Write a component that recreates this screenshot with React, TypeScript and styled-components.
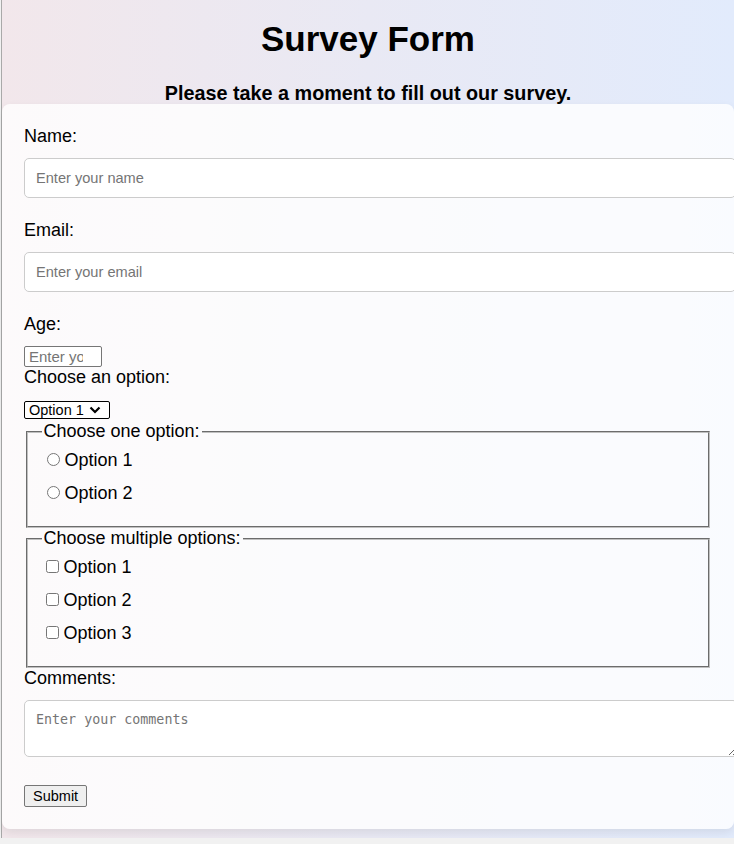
import { FC } from 'react';
import styled, { createGlobalStyle } from 'styled-components';

const GlobalStyle = createGlobalStyle`
	html, body {
		margin: 0;
		padding: 0;
		background: #f1f1f1;
		overflow: hidden;
	}
	body {
		font-family: 'Liberation Sans', Arial, sans-serif;
		color: #000;
	}
`;

const radioOptions = ['Option 1', 'Option 2'];
const checkOptions = ['Option 1', 'Option 2', 'Option 3'];

const ChevronDown: FC = () => (
	<ChevronIcon width="12" height="8" viewBox="0 0 12 8" aria-hidden>
		<path d="M1.5 1.5 L6 6 L10.5 1.5" fill="none" stroke="#000" strokeWidth="2.2" />
	</ChevronIcon>
);

const App: FC = () => {
	return (
		<>
			<GlobalStyle />
			<Page>
				<Title>Survey Form</Title>
				<Subtitle>Please take a moment to fill out our survey.</Subtitle>
				<FormCard onSubmit={(e) => e.preventDefault()}>
					<Label htmlFor="name">Name:</Label>
					<TextInput id="name" type="text" placeholder="Enter your name" />

					<Label htmlFor="email">Email:</Label>
					<TextInput id="email" type="email" placeholder="Enter your email" />

					<Label htmlFor="age">Age:</Label>
					<AgeInput id="age" type="number" placeholder="Enter your age" />

					<Label htmlFor="dropdown" $tight>
						Choose an option:
					</Label>
					<SelectWrap>
						<Select id="dropdown" defaultValue="1">
							<option value="1">Option 1</option>
							<option value="2">Option 2</option>
						</Select>
						<ChevronDown />
					</SelectWrap>

					<Group>
						<Legend>Choose one option:</Legend>
						{radioOptions.map((opt) => (
							<ChoiceRow key={opt}>
								<input type="radio" name="single" value={opt} />
								{opt}
							</ChoiceRow>
						))}
					</Group>

					<Group>
						<Legend>Choose multiple options:</Legend>
						{checkOptions.map((opt) => (
							<ChoiceRow key={opt}>
								<input type="checkbox" name="multi" value={opt} />
								{opt}
							</ChoiceRow>
						))}
					</Group>

					<Label htmlFor="comments">Comments:</Label>
					<Comments id="comments" placeholder="Enter your comments" />

					<SubmitButton type="submit">Submit</SubmitButton>
				</FormCard>
			</Page>
		</>
	);
};

const Page = styled.div`
	box-sizing: border-box;
	margin-left: 1px;
	width: 733px;
	height: 838px;
	border-left: 1px solid #a9a9a9;
	background: linear-gradient(to right, #f2e7eb 0%, #e9e9f4 50%, #e2ebfc 100%);
	padding-top: 18px;
`;

const Title = styled.h1`
	margin: 0;
	text-align: center;
	font-size: 35px;
	font-weight: bold;
	line-height: 41px;
`;

const Subtitle = styled.h2`
	margin: 23px 0 0;
	text-align: center;
	font-size: 19.8px;
	font-weight: bold;
	line-height: 22px;
`;

const FormCard = styled.form`
	box-sizing: border-box;
	width: 732px;
	padding: 22px 22px;
	background: rgba(255, 255, 255, 0.8);
	border-radius: 8px;
	box-shadow: 0 4px 10px rgba(0, 0, 0, 0.08);
	font-size: 18px;
`;

const Label = styled.label<{ $tight?: boolean }>`
	display: block;
	font-size: 18px;
	line-height: 21px;
	margin-bottom: ${(props) => (props.$tight ? '13px' : '11px')};
`;

const TextInput = styled.input`
	display: block;
	box-sizing: content-box;
	width: 100%;
	height: 18px;
	padding: 10px 11px;
	margin: 0 0 22px;
	border: 1px solid #cccccc;
	border-radius: 5px;
	background: #fff;
	font-family: 'Liberation Sans', Arial, sans-serif;
	font-size: 14.6px;
	&::placeholder {
		color: #757575;
	}
`;

const AgeInput = styled.input`
	display: block;
	box-sizing: border-box;
	width: 78px;
	height: 21px;
	margin: 0;
	padding: 0 18px 0 4px;
	border: 1px solid #767676;
	border-radius: 2px;
	background: #fff;
	font-family: 'Liberation Sans', Arial, sans-serif;
	font-size: 15px;
	&::placeholder {
		color: #757575;
	}
	&::-webkit-inner-spin-button {
		display: none;
	}
`;

const SelectWrap = styled.div`
	position: relative;
	width: 86px;
	margin: 0 0 2px;
`;

const Select = styled.select`
	display: block;
	box-sizing: border-box;
	width: 86px;
	height: 18px;
	margin: 0;
	padding: 0 20px 0 4px;
	border: 1px solid #000;
	border-radius: 2px;
	background: #fff;
	appearance: none;
	font-family: 'Liberation Sans', Arial, sans-serif;
	font-size: 14.5px;
	line-height: 16px;
	color: #000;
`;

const ChevronIcon = styled.svg`
	position: absolute;
	right: 9px;
	top: 5px;
	pointer-events: none;
`;

const Group = styled.fieldset`
	margin: 0 2px;
	padding: 8px 13.5px 10px;
	border: 2px groove #c0c0c0;
	font-size: 18px;
`;

const Legend = styled.legend`
	padding: 0 2px;
	font-size: 18px;
	line-height: 21px;
`;

const ChoiceRow = styled.label`
	display: block;
	line-height: 21px;
	margin-bottom: 12px;
	input[type='radio'] {
		margin: 3px 5px 0 5px;
	}
	input[type='checkbox'] {
		margin: 3px 5px 3px 4px;
	}
`;

const Comments = styled.textarea`
	display: block;
	box-sizing: border-box;
	width: calc(100% + 26px);
	height: 57px;
	margin: 0 0 28px;
	padding: 11px 11px;
	border: 1px solid #cccccc;
	border-radius: 5px;
	background: #fff;
	font-family: 'DejaVu Sans Mono', 'Liberation Mono', monospace;
	font-size: 13.33px;
	&::placeholder {
		color: #757575;
	}
`;

const SubmitButton = styled.button`
	display: block;
	box-sizing: border-box;
	height: 22px;
	padding: 1px 8px;
	border: 1px solid #767676;
	border-radius: 2px;
	background: #efefef;
	font-family: 'Liberation Sans', Arial, sans-serif;
	font-size: 14.5px;
	color: #000;
`;

export default App;
